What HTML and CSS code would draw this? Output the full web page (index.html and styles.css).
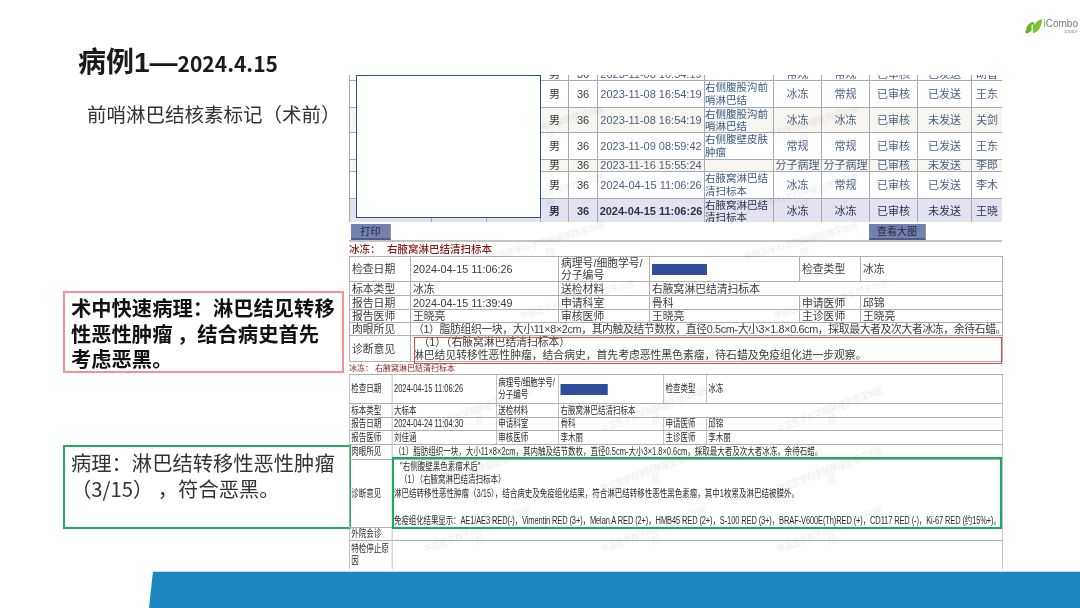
FILE: index.html
```html
<!DOCTYPE html>
<html lang="zh-CN">

<head>
    <meta charset="UTF-8">
    <meta name="viewport" content="width=device-width, initial-scale=1.0">
    <title>病例1</title>
    <link rel="stylesheet" href="styles.css">
</head>

<body>
    <div class="slide">
        <header class="slide-head">
            <h1 class="title">病例1—<span class="title-date">2024.4.15</span></h1>
            <div class="logo">
                <svg class="logo-mark" width="17" height="15" viewBox="0 0 17 15">
                    <path d="M1 14.5 C0.5 8 3 3.5 9 3 C9.5 9 6.5 13.5 1 14.5 Z" fill="#63b52a"/>
                    <path d="M6.5 14.5 C7 7 10.5 2 17 0 C17 8 13.5 13.5 6.5 14.5 Z" fill="#7cc52f"/>
                    <rect x="6.6" y="5.5" width="1.4" height="9" fill="#fff"/>
                    <circle cx="1" cy="13" r="0.8" fill="#e0483c"/>
                </svg>
                <div class="logo-text">
                    <span class="logo-name"><b>i</b>Combo</span>
                    <span class="logo-sub">爱康医疗</span>
                </div>
            </div>
        </header>

        <aside class="notes">
            <p class="subtitle">前哨淋巴结核素标记（术前）</p>
            <p class="note note-red">术中快速病理：淋巴结见转移性恶性肿瘤 ，结合病史首先考虑恶黑。</p>
            <p class="note note-green">病理：淋巴结转移性恶性肿瘤（3/15） ，符合恶黑。</p>
        </aside>

        <main class="pane">
            <div class="shot">
                <div class="list-wrap">
                    <table class="list">
                        <colgroup>
                            <col class="c82"><col class="c55"><col class="c54"><col class="c28"><col class="c29"><col class="c107"><col class="c69"><col class="c48"><col class="c48"><col class="c48"><col class="c54"><col class="c31">
                        </colgroup>
                        <tr class="row-cut"><td></td><td></td><td></td><td>男</td><td>36</td><td>2023-11-08 16:54:19</td><td></td><td>常规</td><td>常规</td><td>已审核</td><td>已发送</td><td>胡晋</td></tr>
                        <tr class="row-27"><td></td><td></td><td></td><td>男</td><td>36</td><td>2023-11-08 16:54:19</td><td class="spec">右侧腹股沟前<br>哨淋巴结</td><td>冰冻</td><td>常规</td><td>已审核</td><td>已发送</td><td>王东</td></tr>
                        <tr class="row-25 alt"><td></td><td></td><td></td><td>男</td><td>36</td><td>2023-11-08 16:54:19</td><td class="spec">右侧腹股沟前<br>哨淋巴结</td><td>冰冻</td><td>冰冻</td><td>已审核</td><td>未发送</td><td>关剑</td></tr>
                        <tr class="row-27"><td></td><td></td><td></td><td>男</td><td>36</td><td>2023-11-09 08:59:42</td><td class="spec">右侧腹壁皮肤<br>肿瘤</td><td>常规</td><td>常规</td><td>已审核</td><td>已发送</td><td>王东</td></tr>
                        <tr class="row-12 alt"><td></td><td></td><td></td><td>男</td><td>36</td><td>2023-11-16 15:55:24</td><td></td><td>分子病理</td><td>分子病理</td><td>已审核</td><td>未发送</td><td>李郎</td></tr>
                        <tr class="row-27"><td></td><td></td><td></td><td>男</td><td>36</td><td>2024-04-15 11:06:26</td><td class="spec">右腋窝淋巴结<br>清扫标本</td><td>冰冻</td><td>常规</td><td>已审核</td><td>已发送</td><td>李木</td></tr>
                        <tr class="row-25 current"><td></td><td></td><td></td><td>男</td><td>36</td><td>2024-04-15 11:06:26</td><td class="spec">右腋窝淋巴结<br>清扫标本</td><td>冰冻</td><td>冰冻</td><td>已审核</td><td>未发送</td><td>王晓</td></tr>
                    </table>
                    <div class="marks marks-list">
                        <span>中国医学科学院肿瘤医院深圳医院</span><span>中国医学科学院肿瘤医院深圳医院</span>
                        <span>中国医学科学院肿瘤医院深圳医院</span><span>中国医学科学院肿瘤医院深圳医院</span>
                    </div>
                </div>

                <div class="toolbar">
                    <button class="btn">打印</button>
                    <button class="btn btn-big">查看大图</button>
                </div>

                <div class="frozen">
                    <h2 class="report-title"><span>冰冻：</span>右腋窝淋巴结清扫标本</h2>
                    <table class="report">
                        <colgroup>
                            <col class="c61"><col class="c148"><col class="c91"><col class="c150"><col class="c61"><col class="c142">
                        </colgroup>
                        <tr class="h25"><td>检查日期</td><td>2024-04-15 11:06:26</td><td>病理号/细胞学号/分子编号</td><td><i class="redact"></i></td><td>检查类型</td><td>冰冻</td></tr>
                        <tr class="h14"><td>标本类型</td><td>冰冻</td><td>送检材料</td><td colspan="3">右腋窝淋巴结清扫标本</td></tr>
                        <tr class="h14"><td>报告日期</td><td>2024-04-15 11:39:49</td><td>申请科室</td><td>骨科</td><td>申请医师</td><td>邱锦</td></tr>
                        <tr class="h13"><td>报告医师</td><td>王晓亮</td><td>审核医师</td><td>王晓亮</td><td>主诊医师</td><td>王晓亮</td></tr>
                        <tr class="h13"><td>肉眼所见</td><td colspan="5" class="long gross">（1）脂肪组织一块，大小11×8×2cm，其内触及结节数枚，直径0.5cm-大小3×1.8×0.6cm，採取最大者及次大者冰冻，余待石蜡。</td></tr>
                        <tr class="h25"><td>诊断意见</td><td colspan="5" class="long opinion">　（1）（右腋窝淋巴结清扫标本）<br>淋巴结见转移性恶性肿瘤，结合病史，首先考虑恶性黑色素瘤，待石蜡及免疫组化进一步观察。</td></tr>
                    </table>
                    <div class="marks marks-wide">
                        <span>中国医学科学院肿瘤医院深圳医院</span><span>中国医学科学院肿瘤医院深圳医院</span>
                        <span>中国医学科学院肿瘤医院深圳医院</span><span>中国医学科学院肿瘤医院深圳医院</span>
                    </div>
                </div>

                <div class="final">
                    <h2 class="report-title report-title-sm"><span>冰冻：</span>右腋窝淋巴结清扫标本</h2>
                    <div class="squeeze">
                        <table class="report report-final">
                            <colgroup>
                                <col class="f57"><col class="f139"><col class="f83"><col class="f140"><col class="f57"><col class="f394">
                            </colgroup>
                            <tr class="h29"><td>检查日期</td><td>2024-04-15 11:06:26</td><td>病理号/细胞学号/分子编号</td><td><i class="redact redact-final"></i></td><td>检查类型</td><td>冰冻</td></tr>
                            <tr class="h14"><td>标本类型</td><td>大标本</td><td>送检材料</td><td colspan="3">右腋窝淋巴结清扫标本</td></tr>
                            <tr class="h13"><td>报告日期</td><td>2024-04-24 11:04:30</td><td>申请科室</td><td>骨科</td><td>申请医师</td><td>邱锦</td></tr>
                            <tr class="h14"><td>报告医师</td><td>刘佳涵</td><td>审核医师</td><td>李木丽</td><td>主诊医师</td><td>李木丽</td></tr>
                            <tr class="h15"><td>肉眼所见</td><td colspan="5" class="long">（1）脂肪组织一块，大小11×8×2cm，其内触及结节数枚，直径0.5cm-大小3×1.8×0.6cm，採取最大者及次大者冰冻，余待石蜡。</td></tr>
                            <tr class="h68"><td>诊断意见</td><td colspan="5" class="long diag">
                                <div class="diag-head">"右侧腹壁黑色素瘤术后"</div>
                                <div class="diag-head">（1）（右腋窝淋巴结清扫标本）</div>
                                <div>淋巴结转移性恶性肿瘤（3/15），结合病史及免疫组化结果，符合淋巴结转移性恶性黑色素瘤，其中1枚累及淋巴结被膜外。</div>
                                <div>&nbsp;</div>
                                <div class="diag-ihc">免疫组化结果显示：AE1/AE3 RED(-)，Vimentin RED (3+)，Melan A RED (2+)，HMB45 RED (2+)，S-100 RED (3+)，BRAF-V600E(Th)RED (+)，CD117 RED (-)，Ki-67 RED (约15%+)。</div>
                            </td></tr>
                            <tr class="h13"><td>外院会诊</td><td colspan="5"></td></tr>
                            <tr class="h29 last"><td>特检停止原因</td><td colspan="5"></td></tr>
                        </table>
                        <div class="marks marks-final">
                            <span>中国医学科学院肿瘤医院深圳医院</span><span>中国医学科学院肿瘤医院深圳医院</span><span>中国医学科学院肿瘤医院深圳医院</span>
                            <span>中国医学科学院肿瘤医院深圳医院</span><span>中国医学科学院肿瘤医院深圳医院</span><span>中国医学科学院肿瘤医院深圳医院</span>
                            <span>中国医学科学院肿瘤医院深圳医院</span><span>中国医学科学院肿瘤医院深圳医院</span><span>中国医学科学院肿瘤医院深圳医院</span>
                        </div>
                    </div>
                </div>
            </div>

            <div class="mask"></div>
            <div class="mark-box mark-red"></div>
            <div class="mark-box mark-green"></div>
        </main>

        <div class="footer-band"></div>
    </div>
</body>

</html>
```

FILE: styles.css
```css
html, body {
    margin: 0;
    background: #fff;
}

body {
    font-family: "Noto Sans CJK SC", "Liberation Sans", sans-serif;
    color: #222;
}

.slide {
    width: 1080px;
    height: 608px;
    overflow: hidden;
    display: grid;
    grid-template-columns: 349px 731px;
    grid-template-rows: 75px 496px 37px;
    filter: blur(.3px);
}

/* head */
.slide-head {
    grid-column: 1 / -1;
    display: flex;
    justify-content: space-between;
    align-items: flex-start;
    padding: 0 2px 0 78px;
}

.title {
    margin: 44px 0 0;
    font-family: "Liberation Sans", "Noto Sans CJK SC", sans-serif;
    font-size: 28px;
    line-height: 38px;
    font-weight: 700;
    color: #1a1a1a;
}

.title-date {
    font-family: "Noto Sans CJK SC", sans-serif;
    font-size: 21px;
}

.logo {
    display: flex;
    align-items: center;
    gap: 2px;
    margin-top: 19px;
}

.logo-mark {
    flex: none;
}

.logo-text {
    display: flex;
    flex-direction: column;
    align-items: flex-end;
    font-family: "Liberation Sans", sans-serif;
}

.logo-name {
    font-size: 10px;
    line-height: 10px;
    color: #6f7c72;
}

.logo-name b {
    color: #6cbb2a;
    font-weight: 400;
}

.logo-sub {
    font-family: "Noto Sans CJK SC", sans-serif;
    font-size: 3.5px;
    line-height: 5px;
    color: #8a9a8a;
}

/* left column */
.notes {
    display: flex;
    flex-direction: column;
    align-items: flex-start;
    padding-left: 63px;
}

.subtitle {
    margin: 25px 0 0 24px;
    font-size: 19.5px;
    line-height: 28px;
    white-space: nowrap;
    color: #333;
}

.note {
    box-sizing: border-box;
    margin: 0;
    font-size: 20.3px;
    line-height: 25.5px;
    padding: 2px 5px 0 6px;
}

.note-red {
    margin-top: 163px;
    width: 281px;
    height: 82px;
    border: 2px solid #f98f90;
    font-weight: 700;
    color: #111;
}

.note-green {
    margin-top: 72px;
    width: 288px;
    height: 84px;
    border: 2px solid #1fae5e;
    padding-top: 3px;
    color: #333;
}

/* screenshot on the right */
.pane {
    position: relative;
    width: 653px;
}

.shot {
    filter: blur(.35px);
    font-family: "Liberation Sans", "Noto Sans CJK SC", sans-serif;
    color: #3a3a3a;
}

table {
    border-collapse: collapse;
    table-layout: fixed;
    width: 653px;
}

td {
    padding: 0;
    overflow: hidden;
}

.list-wrap {
    position: relative;
    height: 147px;
    overflow: hidden;
}

.list {
    margin-top: -16px;
    font-size: 11px;
    line-height: 12px;
    text-align: center;
}

.list td {
    border: 1px solid #a9a9b4;
    white-space: nowrap;
}

.list .spec {
    text-align: left;
    font-size: 10.5px;
    color: #3b5a86;
}

.list td:nth-child(6),
.list td:nth-child(n+8) {
    color: #4a5f80;
}

.row-cut td {
    height: 20px;
    vertical-align: bottom;
}

.row-27 td { height: 26px; line-height: 13px; }
.row-25 td { height: 24px; }
.row-12 td { height: 11px; line-height: 11px; }

.alt {
    background: #f6f5ef;
}

.current {
    background: #e3e3ef;
}

.current td:nth-child(4),
.current td:nth-child(5),
.current td:nth-child(6) {
    font-weight: 700;
}

.current td:nth-child(n) {
    color: #2c3350;
}

.c82 { width: 82px; }
.c55 { width: 55px; }
.c54 { width: 54px; }
.c28 { width: 28px; }
.c29 { width: 29px; }
.c107 { width: 107px; }
.c69 { width: 69px; }
.c48 { width: 48px; }
.c31 { width: 31px; }

.toolbar {
    display: flex;
    justify-content: space-between;
    height: 20px;
    box-sizing: border-box;
    padding: 2px 76px 0 2px;
    border-bottom: 2px solid #c4c4c4;
}

.btn {
    height: 16px;
    width: 40px;
    padding: 0;
    font: 10px/14px "Noto Sans CJK SC", sans-serif;
    color: #1f2440;
    background: #7480b0;
    border: 0;
    border-bottom: 2px solid #555d86;
    border-right: 1px solid #999;
}

.btn-big {
    width: 57px;
}

.frozen {
    position: relative;
}

.report-title {
    margin: 0;
    height: 14px;
    font-size: 10.5px;
    line-height: 14px;
    font-weight: 500;
    color: #8a1a1a;
    font-family: "Noto Sans CJK SC", sans-serif;
}

.report-title span {
    display: inline-block;
    width: 38px;
}

.report-title-sm {
    height: 12px;
    line-height: 12px;
    font-size: 8px;
    font-weight: 400;
}

.report-title-sm span {
    width: 26px;
}

.report {
    font-size: 10.8px;
    line-height: 12px;
}

.report td {
    border: 1px solid #b0b0b0;
    padding: 0 2px;
    vertical-align: middle;
}

.report .long {
    white-space: nowrap;
}

.report .gross {
    letter-spacing: -.34px;
}

.report .opinion {
    line-height: 12.5px;
}

.h13 td { height: 12px; }
.h14 td { height: 13px; }
.h15 td { height: 14px; }
.h25 td { height: 24px; }
.h29 td { height: 28px; }
.h68 td { height: 67px; }

.c61 { width: 61px; }
.c148 { width: 148px; }
.c91 { width: 91px; }
.c150 { width: 150px; }
.c142 { width: 142px; }

.redact {
    display: block;
    width: 55px;
    height: 11px;
    background: #2f4f9a;
}

/* final report is squeezed sideways in the source picture */
.squeeze {
    position: relative;
    width: 871px;
    transform: scaleX(.75);
    transform-origin: 0 0;
}

.report-final {
    width: 871px;
    font-size: 10px;
    color: #2a2a2a;
}

.f57 { width: 57px; }
.f139 { width: 139px; }
.f83 { width: 83px; }
.f140 { width: 140px; }
.f394 { width: 395px; }

.redact-final {
    width: 63px;
}

.report .diag {
    line-height: 13.4px;
}

.diag-head {
    padding-left: 8px;
}

.diag-ihc {
    letter-spacing: -.16px;
}

.last td {
    border-bottom: 0;
}

/* watermark */
.marks {
    position: absolute;
    display: grid;
    justify-items: center;
    pointer-events: none;
}

.marks span {
    width: 126px;
    font-size: 8.5px;
    line-height: 11px;
    text-align: center;
    color: rgba(60, 60, 60, .1);
    transform: rotate(-16deg);
}

.marks-list {
    top: 45px;
    left: 73px;
    grid-template-columns: 254px 254px;
    row-gap: 46px;
}

.marks-wide {
    top: -6px;
    left: 73px;
    grid-template-columns: 254px 254px;
    row-gap: 36px;
}

.marks-wide span:nth-child(n+3) {
    margin-left: 60px;
}

.marks-final {
    top: 30px;
    left: 55px;
    grid-template-columns: repeat(3, 235px);
    row-gap: 38px;
}

.marks-final span {
    font-size: 10.5px;
    width: 154px;
}

/* things that lie over the screenshot */
.mask {
    position: absolute;
    top: 0;
    left: 7px;
    width: 185px;
    height: 143px;
    box-sizing: border-box;
    background: #fff;
    border: 1px solid #2f528f;
}

.mark-box {
    position: absolute;
    box-sizing: border-box;
}

.mark-red {
    top: 262px;
    left: 65px;
    width: 588px;
    height: 27px;
    border: 1px solid #e8494b;
}

.mark-green {
    top: 382px;
    left: 43px;
    width: 610px;
    height: 72px;
    border: 2px solid #14ae5c;
}

/* bottom band */
.footer-band {
    grid-column: 1 / -1;
    margin-left: 149px;
    background: #1a87c0;
    border-top: 1px solid #c3dfee;
    clip-path: polygon(4px 0, 100% 0, 100% 100%, 0 100%);
}
```
